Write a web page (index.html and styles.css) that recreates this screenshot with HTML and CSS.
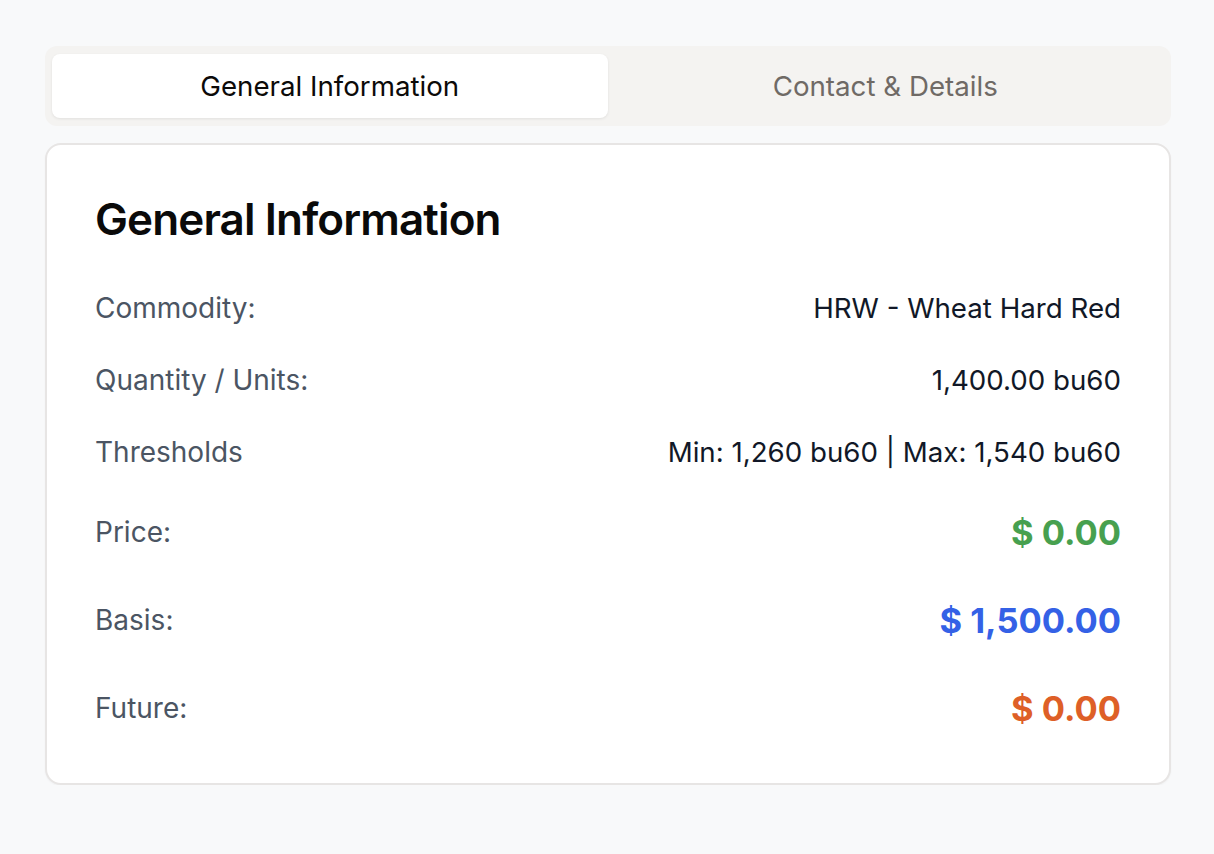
FILE: index.html
```html
<!DOCTYPE html>
<html lang="en">
<head>
<meta charset="utf-8">
<title>General Information</title>
<link rel="stylesheet" href="styles.css">
</head>
<body>
<main class="page">
  <div class="tabs">
    <button class="tab tab-active">General Information</button>
    <button class="tab">Contact &amp; Details</button>
  </div>
  <section class="card">
    <h1 class="card-title">General Information</h1>
    <div class="rows">
      <div class="row">
        <span class="label">Commodity:</span>
        <span class="value">HRW - Wheat Hard Red</span>
      </div>
      <div class="row">
        <span class="label">Quantity / Units:</span>
        <span class="value">1,400.00 bu60</span>
      </div>
      <div class="row">
        <span class="label">Thresholds</span>
        <span class="value">Min: 1,260 bu60 | Max: 1,540 bu60</span>
      </div>
      <div class="row row-money">
        <span class="label">Price:</span>
        <span class="money money-green">$ 0.00</span>
      </div>
      <div class="row row-money">
        <span class="label">Basis:</span>
        <span class="money money-blue">$ 1,500.00</span>
      </div>
      <div class="row row-money">
        <span class="label">Future:</span>
        <span class="money money-orange">$ 0.00</span>
      </div>
    </div>
  </section>
</main>
</body>
</html>
```
FILE: styles.css
```css
* { box-sizing: border-box; }
html, body {
  margin: 0;
  padding: 0;
  background: #f8f9fa;
  font-family: Inter, "Noto Sans", "Liberation Sans", sans-serif;
}
.page {
  padding: 46px 43px 0 45px;
  display: flex;
  flex-direction: column;
  gap: 17px;
}
.tabs {
  display: grid;
  grid-template-columns: 1fr 1fr;
  padding: 8px 8px 8px 7px;
  background: #f4f3f1;
  border-radius: 12px;
  height: 80px;
}
.tab {
  border: 0;
  background: transparent;
  font-family: inherit;
  font-size: 27.7px;
  font-weight: 400;
  color: #6f6a66;
  border-radius: 8px;
  cursor: pointer;
}
.tab-active {
  background: #ffffff;
  color: #0c0a09;
  box-shadow: 0 1px 3px rgba(0,0,0,0.08);
}
.card {
  background: #ffffff;
  border: 2px solid #e7e5e4;
  border-radius: 16px;
  box-shadow: 0 1px 2px rgba(0,0,0,0.04);
  padding: 48px 48px 31px 48px;
}
.card-title {
  margin: 0;
  font-size: 44px;
  line-height: 53px;
  font-weight: 600;
  letter-spacing: -0.02em;
  color: #0a0a0a;
}
.rows {
  margin-top: 26px;
  display: flex;
  flex-direction: column;
}
.row {
  display: flex;
  justify-content: space-between;
  align-items: center;
  height: 72px;
}
.row-money { height: 88px; }
.label {
  font-size: 28px;
  color: #4b5563;
}
.value {
  font-size: 27.7px;
  color: #111827;
}
.money {
  font-size: 34.5px;
  font-weight: 700;
}
.money-green { color: #47a04f; }
.money-blue { color: #3461e6; }
.money-orange { color: #de5f27; }
```
